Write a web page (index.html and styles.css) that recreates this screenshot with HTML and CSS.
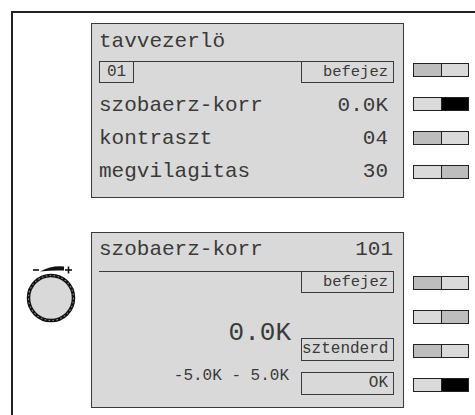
FILE: index.html
```html
<!DOCTYPE html>
<html lang="hu">
<head>
  <meta charset="UTF-8">
  <title>Távvezérlő</title>
  <link rel="stylesheet" href="styles.css">
</head>
<body>
  <div class="frame">
    <div class="row">
      <div class="side"></div>
      <section class="panel panel-menu">
        <div class="title">tavvezerlö</div>
        <div class="bar">
          <span class="tag">01</span>
          <span class="rule"></span>
          <span class="btn">befejez</span>
        </div>
        <div class="item"><span>szobaerz-korr</span><span>0.0K</span></div>
        <div class="item"><span>kontraszt</span><span>04</span></div>
        <div class="item"><span>megvilagitas</span><span>30</span></div>
      </section>
      <div class="leds leds-menu">
        <div class="led"><i class="mid"></i><i></i></div>
        <div class="led"><i></i><i class="on"></i></div>
        <div class="led"><i class="mid"></i><i></i></div>
        <div class="led"><i></i><i class="mid"></i></div>
      </div>
    </div>

    <div class="row">
      <div class="side">
        <svg class="knob" width="78" height="64" viewBox="0 0 78 64">
          <line x1="20" y1="8" x2="26" y2="8" stroke="#111" stroke-width="1.6"/>
          <path d="M27 9.5 Q39 3 51 4.5 L51 8.5 Q39 8 27 9.5 Z" fill="#111"/>
          <line x1="52" y1="8" x2="59" y2="8" stroke="#111" stroke-width="1.6"/>
          <line x1="55.5" y1="4.5" x2="55.5" y2="11.5" stroke="#111" stroke-width="1.6"/>
          <circle cx="38" cy="36" r="22.5" fill="#d9d9d9" stroke="#111" stroke-width="3.5"/>
          <circle cx="38" cy="36" r="22.5" fill="none" stroke="#8a8a8a" stroke-width="1.1" stroke-dasharray="1.6 2.4"/>
        </svg>
      </div>
      <section class="panel panel-edit">
        <div class="head"><span>szobaerz-korr</span><span>101</span></div>
        <div class="bar bar-edit">
          <span class="rule"></span>
          <span class="btn">befejez</span>
        </div>
        <div class="set">
          <span class="big">0.0K</span>
          <span class="btn btn-low">sztenderd</span>
        </div>
        <div class="range">
          <span class="limits">-5.0K - 5.0K</span>
          <span class="btn btn-low">OK</span>
        </div>
      </section>
      <div class="leds leds-edit">
        <div class="led"><i class="mid"></i><i></i></div>
        <div class="led"><i></i><i class="mid"></i></div>
        <div class="led"><i class="mid"></i><i></i></div>
        <div class="led"><i></i><i class="on"></i></div>
      </div>
    </div>
  </div>
</body>
</html>
```

FILE: styles.css
```css
/* panel kijelzo */
body {
  margin: 0;
  padding: 11px 0 0 11px;
  background: #fff;
  font-family: "Courier New", "Nimbus Mono PS", "Nimbus Mono L", "FreeMono", "Liberation Mono", monospace;
  color: #3a3a3a;
  overflow: hidden;
}

.frame {
  height: 404px;
  box-sizing: border-box;
  padding-top: 10px;
  border-left: 2px solid #222;
  border-top: 2px solid #222;
}

.row {
  display: flex;
  align-items: flex-start;
}

.row + .row {
  margin-top: 34px;
}

.side {
  width: 78px;
  flex: none;
}

.knob {
  display: block;
  margin-top: 30px;
}

.panel {
  width: 313px;
  flex: none;
  box-sizing: border-box;
  background: #d9d9d9;
  border: 1px solid #3a3a3a;
  padding: 6px 9px 9px 7px;
}

.title {
  font-size: 21px;
  line-height: 24px;
}

.bar {
  display: flex;
  height: 22px;
  margin: 7px 0 6px;
  font-size: 15.5px;
  line-height: 20px;
}

.tag {
  width: 35px;
  box-sizing: border-box;
  border: 1px solid #3a3a3a;
  text-align: center;
  font-size: 16px;
}

.rule {
  flex: 1;
  border-top: 1px solid #3a3a3a;
}

.btn {
  width: 93px;
  flex: none;
  box-sizing: border-box;
  border: 1px solid #3a3a3a;
  text-align: right;
  padding-right: 5px;
}

.item {
  display: flex;
  justify-content: space-between;
  font-size: 21px;
  line-height: 33px;
  padding-right: 6px;
}

/* beallito panel */
.panel-edit {
  padding-top: 5px;
  padding-bottom: 12px;
}

.head {
  display: flex;
  justify-content: space-between;
  font-size: 21px;
  line-height: 24px;
  padding-right: 1px;
}

.bar-edit {
  margin: 9px 0 0;
}

.set {
  display: flex;
  height: 68px;
}

.big {
  flex: 1;
  margin-top: 25px;
  padding-right: 10px;
  text-align: right;
  font-size: 26px;
  line-height: 30px;
}

.btn-low {
  align-self: flex-end;
  height: 23px;
  font-size: 16px;
  line-height: 21px;
}

.range {
  display: flex;
  height: 23px;
  margin-top: 11px;
}

.limits {
  flex: 1;
  margin-top: -5px;
  padding-right: 12px;
  text-align: right;
  font-size: 16px;
  line-height: 18px;
}

/* jelzok */
.leds {
  margin-left: 9px;
  display: flex;
  flex-direction: column;
  gap: 20px;
  padding-top: 40px;
}

.leds-edit {
  padding-top: 44px;
}

.led {
  display: flex;
  width: 56px;
  height: 14px;
  box-sizing: border-box;
  border: 1px solid #222;
}

.led i {
  flex: 1;
  background: #dadada;
}

.led i + i {
  border-left: 1px solid #222;
}

.led .mid {
  background: #bdbdbd;
}

.led .on {
  background: #000;
}
```
